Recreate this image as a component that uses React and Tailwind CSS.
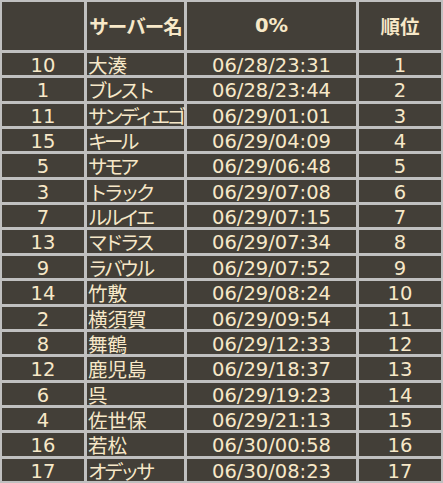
import React from "react";

const K = "tracking-[-3.5px]";
const rows = [
  ["10", "大湊", "06/28/23:31", "1", ""],
  ["1", "ブレスト", "06/28/23:44", "2", K],
  ["11", "サンディエゴ", "06/29/01:01", "3", K],
  ["15", "キール", "06/29/04:09", "4", K],
  ["5", "サモア", "06/29/06:48", "5", K],
  ["3", "トラック", "06/29/07:08", "6", K],
  ["7", "ルルイエ", "06/29/07:15", "7", K],
  ["13", "マドラス", "06/29/07:34", "8", K],
  ["9", "ラバウル", "06/29/07:52", "9", K],
  ["14", "竹敷", "06/29/08:24", "10", ""],
  ["2", "横須賀", "06/29/09:54", "11", ""],
  ["8", "舞鶴", "06/29/12:33", "12", ""],
  ["12", "鹿児島", "06/29/18:37", "13", ""],
  ["6", "呉", "06/29/19:23", "14", ""],
  ["4", "佐世保", "06/29/21:13", "15", ""],
  ["16", "若松", "06/30/00:58", "16", ""],
  ["17", "オデッサ", "06/30/08:23", "17", K],
];

export default function App() {
  return (
    <div className="w-[443px] h-[483px] bg-[#c0c0c0] p-[2px] grid grid-cols-[82px_97px_169px_82px] grid-rows-[48px_repeat(17,minmax(0,1fr))] gap-[3px] text-[#f7e8c8] font-['DejaVu_Sans','Noto_Sans_CJK_JP',sans-serif]">
      <div className="bg-[#433f38]" />
      <div className="bg-[#433f38] flex items-center justify-center font-bold text-[19.5px] whitespace-nowrap font-['Noto_Sans_CJK_JP',sans-serif] tracking-[-1px] leading-none">サーバー名</div>
      <div className="bg-[#433f38] flex items-center justify-center font-bold text-[19.5px] leading-none">0%</div>
      <div className="bg-[#433f38] flex items-center justify-center font-bold text-[19.5px] font-['Noto_Sans_CJK_JP',sans-serif] leading-none">順位</div>
      {rows.map((r, i) => (
        <React.Fragment key={i}>
          <div className="bg-[#433f38] text-center text-[19.5px] leading-[22px] pt-[2px]">{r[0]}</div>
          <div className={`bg-[#433f38] text-left text-[19.5px] leading-[22px] pt-[1px] pl-[1px] whitespace-nowrap font-['Noto_Sans_CJK_JP',sans-serif] ${r[4]}`}>{r[1]}</div>
          <div className="bg-[#433f38] text-center text-[19.5px] leading-[22px] pt-[2px]">{r[2]}</div>
          <div className="bg-[#433f38] text-center text-[19.5px] leading-[22px] pt-[2px]">{r[3]}</div>
        </React.Fragment>
      ))}
    </div>
  );
}
